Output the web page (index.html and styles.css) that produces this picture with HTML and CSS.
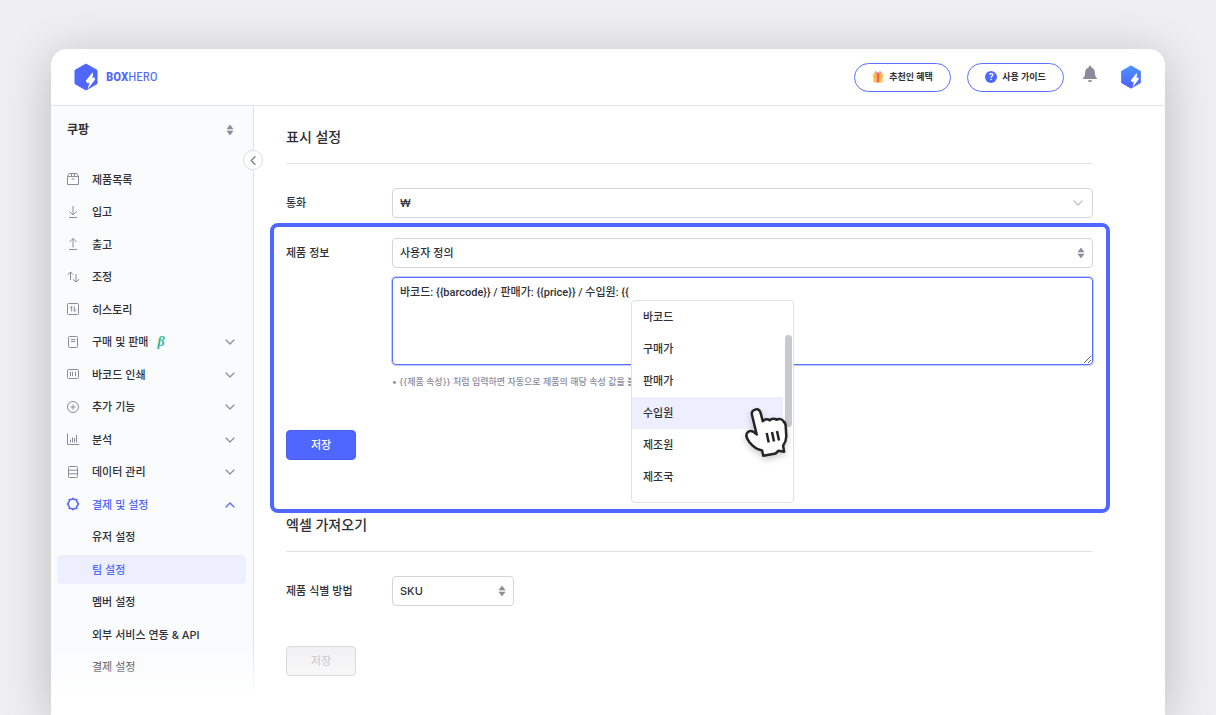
FILE: index.html
```
<!DOCTYPE html>
<html lang="ko">
<head>
<meta charset="utf-8">
<title>BoxHero</title>
<link rel="stylesheet" href="styles.css">
</head>
<body>
<svg class="defs" aria-hidden="true">
  <defs>
    <linearGradient id="avatar-fill" x1="0" y1="0" x2="0" y2="1"><stop offset="0" stop-color="#4a94ff"/><stop offset="1" stop-color="#4f60ff"/></linearGradient>
    <symbol id="sort" viewBox="0 0 8 12"><path d="M4 1 7 5H1zM1 7h6L4 11z" fill="#8b8b9c" stroke="#8b8b9c" stroke-width=".6" stroke-linejoin="round"/></symbol>
    <symbol id="down" viewBox="0 0 10 6"><path d="M1 1l4 4 4-4" fill="none" stroke="currentColor" stroke-width="1.2" stroke-linecap="round" stroke-linejoin="round"/></symbol>
    <symbol id="bolt" viewBox="0 0 24 28"><path d="M18.500 9.500 11.800 17.800l1.300 2.400 2.300-.7-1.700 6.700 7.400-9.700-.9-2.300-1.900.8.900-4.200z" fill="#fff"/></symbol>
  </defs>
</svg>
<div class="window">
  <header class="topbar">
    <a class="brand" href="#">
      <svg width="24" height="28" viewBox="0 0 24 28" aria-hidden="true"><path d="M12 1 23 7.300V20.700L12 27 1 20.700V7.300z" fill="#4f67ff" stroke="#4f67ff" stroke-linejoin="round"/><use href="#bolt"/></svg>
      <span class="brand-name"><b>BOX</b>HERO</span>
    </a>
    <nav class="top-actions">
      <button class="pill" type="button">
        <svg width="12" height="12" viewBox="0 0 12 12" aria-hidden="true"><path d="M.8 2.800h10.400v2.800H.8zM1.400 5.600h9.200v5.900H1.400z" fill="#ffc24b"/><path d="M1.400 5.600h9.200v.7H1.400z" fill="#f2a838"/><path d="M4.800 2.800h2.400v8.700H4.800z" fill="#f0616d"/><path d="M6 3C5 .2 3 .3 3 1.700 3 2.700 4.500 3 6 3zM6 3C7 .2 9 .3 9 1.700 9 2.700 7.500 3 6 3z" fill="none" stroke="#f0616d" stroke-width="1"/></svg>
        추천인 혜택
      </button>
      <button class="pill" type="button">
        <span class="question">?</span>
        사용 가이드
      </button>
      <button class="plain bell" type="button" aria-label="알림">
        <svg width="16" height="18" viewBox="0 0 16 18"><path d="M8 .7c.8 0 1.300.6 1.300 1.300v.4c2.200.6 3.600 2.500 3.600 4.900 0 3.300.6 4.600 2.100 5.900v.9H1v-.9c1.500-1.300 2.100-2.600 2.100-5.900 0-2.400 1.400-4.300 3.600-4.900V2C6.700 1.300 7.200.7 8 .7zM6 15.300h4c0 1.100-.9 2-2 2s-2-.9-2-2z" fill="#8b8b9c"/></svg>
      </button>
      <button class="plain" type="button" aria-label="계정">
        <svg width="22" height="24" viewBox="0 0 24 28"><path d="M12 1 23 7.300V20.700L12 27 1 20.700V7.300z" fill="url(#avatar-fill)" stroke="url(#avatar-fill)" stroke-linejoin="round"/><use href="#bolt"/></svg>
      </button>
    </nav>
  </header>
  <div class="body">
    <aside class="sidebar">
      <button class="team" type="button">쿠팡 <svg width="8" height="12"><use href="#sort"/></svg></button>
      <button class="collapse" type="button" aria-label="메뉴 접기"><svg width="6" height="9" viewBox="0 0 6 9"><path d="M5 .7 1.200 4.500 5 8.300" fill="none" stroke="#7d7d8f" stroke-width="1.300" stroke-linecap="round" stroke-linejoin="round"/></svg></button>
      <nav class="menu">
        <a href="#"><svg class="ico" viewBox="0 0 14 14"><path d="M3 1.500h8l1.500 3v8h-11v-8zM1.500 4.500h11M5.500 4.500v-3M8.500 4.500v-3M5.500 7h3"/></svg>제품목록</a>
        <a href="#"><svg class="ico" viewBox="0 0 14 14"><path d="M7 1v9M3.500 6.500 7 10l3.500-3.500M3 12.500h8"/></svg>입고</a>
        <a href="#"><svg class="ico" viewBox="0 0 14 14"><path d="M7 10.500v-9M3.500 5 7 1.500 10.500 5M3 12.500h8"/></svg>출고</a>
        <a href="#"><svg class="ico" viewBox="0 0 14 14"><path d="M4.500 10V2M1.500 4.700 4.500 2l2.500 2.700M10 4v8M7 9.300 10 12l3-2.700"/></svg>조정</a>
        <a href="#"><svg class="ico" viewBox="0 0 14 14"><rect x="1.500" y="1.500" width="11" height="11" rx="1"/><path d="M5.700 9.500v-5L3.800 6.300M8.300 4.500v5l1.900-1.800"/></svg>히스토리</a>
        <a href="#"><svg class="ico" viewBox="0 0 14 14"><rect x="2.500" y="1.500" width="9" height="11" rx="1"/><path d="M4.800 4.500h4.400M4.800 6.500h4.400"/></svg>구매 및 판매<i class="beta">β</i><svg class="chev"><use href="#down"/></svg></a>
        <a href="#"><svg class="ico" viewBox="0 0 14 14"><rect x="1.500" y="2.500" width="11" height="9" rx="1"/><path d="M4.500 4.800v4.400M6.500 4.800v4.400M9.500 4.800v4.400"/></svg>바코드 인쇄<svg class="chev"><use href="#down"/></svg></a>
        <a href="#"><svg class="ico" viewBox="0 0 14 14"><circle cx="7" cy="7" r="5.500"/><path d="M7 4.500v5M4.500 7h5"/></svg>추가 기능<svg class="chev"><use href="#down"/></svg></a>
        <a href="#"><svg class="ico" viewBox="0 0 14 14"><path d="M1.500 1.500v11h11.500M4.500 10.500V7.500M6.500 10.500V5.500M8.500 10.500V6M10.500 10.500V3"/></svg>분석<svg class="chev"><use href="#down"/></svg></a>
        <a href="#"><svg class="ico" viewBox="0 0 14 14"><rect x="2.500" y="1.500" width="9" height="11" rx="1"/><path d="M2.500 5.200h9M2.500 8.800h9"/></svg>데이터 관리<svg class="chev"><use href="#down"/></svg></a>
        <a class="open" href="#"><svg class="ico gear" viewBox="0 0 14 14"><path d="M5.600 2.600 7 1.300l1.400 1.300 2.300-.1v2L12.500 7l-1.800 2.500v2l-2.300-.1L7 12.700l-1.400-1.300-2.300.1v-2L1.500 7l1.800-2.500v-2z"/></svg>결제 및 설정<svg class="chev up"><use href="#down"/></svg></a>
        <a class="sub" href="#">유저 설정</a>
        <a class="sub current" href="#">팀 설정</a>
        <a class="sub" href="#">멤버 설정</a>
        <a class="sub" href="#">외부 서비스 연동 &amp; API</a>
        <a class="sub" href="#">결제 설정</a>
      </nav>
    </aside>
    <main class="content">
      <h2>표시 설정</h2>
      <div class="row">
        <label for="currency">통화</label>
        <div class="select light"><select id="currency"><option>₩</option></select><svg class="chev"><use href="#down"/></svg></div>
      </div>
      <section class="highlight">
        <div class="row">
          <label for="info">제품 정보</label>
          <div class="field">
            <div class="select"><select id="info"><option>사용자 정의</option></select><svg class="sort"><use href="#sort"/></svg></div>
            <div class="editor">
              <textarea aria-label="제품 정보 형식" spellcheck="false">바코드: {{barcode}} / 판매가: {{price}} / 수입원: {{</textarea>
              <div class="popup">
                <ul role="listbox" aria-label="제품 속성">
                  <li role="option">바코드</li>
                  <li role="option">구매가</li>
                  <li role="option">판매가</li>
                  <li role="option" class="active" aria-selected="true">수입원</li>
                  <li role="option">제조원</li>
                  <li role="option">제조국</li>
                </ul>
                <span class="thumb"></span>
                <svg class="pointer" width="50" height="58" viewBox="0 0 50 58" aria-hidden="true"><path d="M10 13c-1.500-5.500 6.500-8 8.500-2.500l2.300 8.800c2-2.500 5.200-2.600 7-.9 2-2.200 5-2.200 6.700-.6 2.500-1.700 6-.7 7 1.700 1.700.8 2 2.500 2.200 4.500l.6 10.500c0 4-1 6-3.200 9.200l1 6-5.600-.9-3 2.700-12.200 2.300-1.200-5.300c-5-1-9.300-4-12.800-8.500C4 35.500 3.500 32 6 30c2.800-2 6-.3 8.700 2.500z" fill="#fff" stroke="#252527" stroke-width="2.500" stroke-linejoin="round"/><path d="m24.700 31 2 9.500M30 30l2 9.500M35 29l2 9.500" fill="none" stroke="#252527" stroke-width="2.500"/></svg>
              </div>
            </div>
            <p class="hint">• {{제품 속성}} 처럼 입력하면 자동으로 제품의 해당 속성 값을 불</p>
          </div>
        </div>
        <button class="save" type="button">저장</button>
      </section>
      <h2>엑셀 가져오기</h2>
      <div class="row">
        <label for="key">제품 식별 방법</label>
        <div class="select short"><select id="key"><option>SKU</option></select><svg class="sort"><use href="#sort"/></svg></div>
      </div>
      <button class="save last" type="button" disabled>저장</button>
    </main>
  </div>
</div>
</body>
</html>
```
FILE: styles.css
```
* { box-sizing: border-box; }

body {
  margin: 0;
  min-height: 100vh;
  padding: 49px 51px 0;
  display: flex;
  background: #efeff1;
  color: #2f2f35;
  font: 500 11px/16px Inter, "Noto Sans CJK KR", sans-serif;
  overflow: hidden;
}

button, select, textarea { font: inherit; color: inherit; }
button { cursor: pointer; }
a { color: inherit; text-decoration: none; }

.defs { position: absolute; width: 0; height: 0; }

.window {
  flex: 1;
  display: flex;
  flex-direction: column;
  height: calc(100vh - 49px);
  background: #fff;
  border-radius: 16px 16px 0 0;
  box-shadow: 0 8px 48px rgba(0, 0, 0, .22);
  overflow: hidden;
}

.topbar {
  flex: none;
  display: flex;
  align-items: center;
  justify-content: space-between;
  height: 57px;
  padding: 0 23px;
  border-bottom: 1px solid #e2e2e6;
}

.brand { display: flex; align-items: center; gap: 8px; color: #4f67ff; }
.brand-name { font: 400 13px/20px "Roboto Condensed", Roboto, sans-serif; }

.top-actions { display: flex; align-items: center; }

.pill {
  display: flex;
  align-items: center;
  justify-content: center;
  gap: 5px;
  width: 97px;
  height: 29px;
  margin-right: 16px;
  padding: 0;
  border: 1px solid #5b70ff;
  border-radius: 15px;
  background: #fff;
  font-size: 9px;
  font-weight: 600;
}

.question {
  width: 12px;
  height: 12px;
  border-radius: 50%;
  background: #4f67ff;
  color: #fff;
  font-size: 9px;
  line-height: 12px;
}

.plain { display: flex; padding: 0; border: 0; background: none; }
.bell { margin: 0 22px 6px 2px; }

.body { flex: 1; display: flex; min-height: 0; }

.sidebar {
  position: relative;
  flex: none;
  width: 203px;
  padding: 16px 7px 0 6px;
  background: #fafbfd;
  border-right: 1px solid #e2e2e6;
}

.sidebar::after {
  content: "";
  position: absolute;
  inset: auto -1px 0 0;
  height: 70px;
  background: linear-gradient(rgba(255, 255, 255, 0), #fff 80%);
}

.team {
  display: flex;
  align-items: center;
  justify-content: space-between;
  width: 100%;
  padding: 0 12px 0 10px;
  border: 0;
  background: none;
  font-size: 12px;
  font-weight: 700;
}

.collapse {
  position: absolute;
  top: 44px;
  right: -10px;
  display: grid;
  place-items: center;
  width: 20px;
  height: 20px;
  padding: 0;
  border: 1px solid #dcdce2;
  border-radius: 50%;
  background: #fff;
}

.menu {
  display: flex;
  flex-direction: column;
  justify-content: space-between;
  height: 517px;
  margin-top: 27px;
}

.menu a {
  display: flex;
  align-items: center;
  height: 29px;
  padding: 0 11px 0 9px;
  border-radius: 4px;
}

.menu .sub { padding-left: 35px; }
.menu .current { background: #edefff; color: #4f67ff; }
.menu .open { color: #4f67ff; }

.ico {
  width: 14px;
  height: 14px;
  margin: -1px 12px 0 0;
  fill: none;
  stroke: #8b8b9c;
  stroke-width: 1;
  stroke-linejoin: round;
}
.gear { stroke: #4f67ff; stroke-width: 1.5; }

.beta { margin-left: 9px; color: #2fb894; font: italic 700 14px/16px "Liberation Serif", serif; }

.chev { width: 10px; height: 6px; margin-left: auto; color: #8b8b9c; }
.up { color: #4f67ff; transform: rotate(180deg); }

.content { flex: 1; min-width: 0; padding: 0 72px 0 32px; }

h2 {
  margin: 0 0 24px;
  padding: 20px 0 15px;
  border-bottom: 1px solid #e2e2e6;
  font-size: 14px;
  font-weight: 500;
  line-height: 22px;
}

.row { display: flex; align-items: flex-start; }
.row > label { flex: none; width: 106px; padding-top: 7px; }
.field { flex: 1; min-width: 0; }

.select { position: relative; flex: 1; }
.select select {
  display: block;
  width: 100%;
  height: 30px;
  padding: 0 7px;
  border: 1px solid #d3d3db;
  border-radius: 4px;
  background: #fff;
  appearance: none;
}
.select svg { position: absolute; top: 12px; right: 10px; }
.select .sort { top: 9px; right: 8px; width: 8px; height: 12px; }
.light .chev { color: #bdbdc6; }
.short { flex: none; width: 122px; }

.highlight {
  margin: 5px -17px 0 -16px;
  padding: 11px 13px 49px 12px;
  border: 4px solid #4f67ff;
  border-radius: 8px;
}

.editor { position: relative; margin-top: 9px; }
textarea {
  display: block;
  width: 100%;
  height: 88px;
  padding: 7px;
  border: 1px solid #5b70ff;
  border-radius: 4px;
  background: #fff;
  box-shadow: 0 0 0 1px #c5ccff;
  outline: 0;
  font: 500 11px/16px Roboto, "Noto Sans CJK KR", sans-serif;
}

.popup {
  position: absolute;
  z-index: 1;
  top: 23px;
  left: 239px;
  width: 163px;
  height: 203px;
  border: 1px solid #e0e0e4;
  border-radius: 4px;
  background: #fff;
}
.popup ul { margin: 0; padding: 0 10px 0 0; list-style: none; }
.popup li { padding: 8px 11px; }
.popup .active { background: #edefff; }
.thumb {
  position: absolute;
  top: 34px;
  right: 1px;
  width: 7px;
  height: 92px;
  border-radius: 4px;
  background: #c8c8cf;
}
.pointer {
  position: absolute;
  top: 101px;
  left: 110px;
  filter: drop-shadow(0 3px 3px rgba(0, 0, 0, .2));
}

.hint {
  margin: 9px 0 0;
  color: #8b8b9c;
  font-size: 9px;
  white-space: nowrap;
}

.save {
  display: block;
  width: 70px;
  height: 30px;
  margin-top: 40px;
  padding: 0;
  border: 1px solid #4a5fe8;
  border-radius: 4px;
  background: #4f67ff;
  color: #fff;
}
.save:disabled {
  border-color: #d9d9de;
  background: linear-gradient(#f1f1f3, #f8f8f9);
  color: #cfcfd5;
}

.highlight + h2 { padding-top: 1px; }
```
